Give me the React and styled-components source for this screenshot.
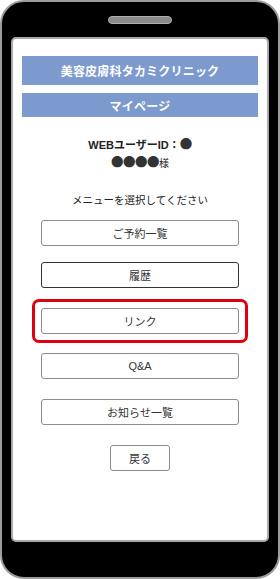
import React from 'react';
import styled, { createGlobalStyle } from 'styled-components';

const GlobalStyle = createGlobalStyle`
  html, body {
    margin: 0;
    padding: 0;
    background: #fff;
  }
  * {
    box-sizing: border-box;
  }
`;

const Phone = styled.div`
  width: 280px;
  height: 579px;
  background: #000;
  border: 2px solid #9c9c9c;
  border-radius: 24px;
  display: flex;
  flex-direction: column;
  align-items: center;
  font-family: 'Liberation Sans', 'Noto Sans CJK JP', sans-serif;
`;

const Speaker = styled.div`
  width: 64px;
  height: 8px;
  margin-top: 14px;
  border-radius: 4px;
  background: #8a8a8a;
  border: 1px solid #b0b0b0;
`;

const Screen = styled.div`
  width: 258px;
  height: 505px;
  margin-top: 13px;
  background: #fff;
  border: 2px solid #a8a8a8;
  border-radius: 5px;
  padding: 17px 9px 0;
  display: flex;
  flex-direction: column;
  align-items: center;
`;

const Banner = styled.div`
  width: 100%;
  height: ${p => p.$h}px;
  margin-bottom: ${p => p.$mb || 0}px;
  background: #7c9acd;
  color: #fff;
  font-weight: 700;
  font-size: 12px;
  display: flex;
  align-items: center;
  justify-content: center;
  letter-spacing: 0.2px;
`;

const UserInfo = styled.div`
  margin-top: 19px;
  text-align: center;
  color: #222;
  font-size: 11px;
  font-weight: 700;
  line-height: 18px;
`;

const Dots = styled.span`
  font-family: 'Noto Sans CJK JP', sans-serif;
  color: #333;
  font-size: 12.5px;
  line-height: 1;
  letter-spacing: -0.5px;
`;

const Sama = styled.span`
  font-size: 10px;
  font-weight: 400;
`;

const Prompt = styled.p`
  margin: 20px 0 0;
  font-size: 10.5px;
  color: #222;
  line-height: 14px;
`;

const MenuList = styled.div`
  margin-top: 13px;
  display: flex;
  flex-direction: column;
  align-items: center;
`;

const MenuButton = styled.button`
  width: ${p => (p.$small ? '60px' : '198px')};
  height: 26px;
  margin-top: ${p => p.$mt || 0}px;
  background: #fff;
  border: 1px solid ${p => (p.$dark ? '#333' : '#8c8c8c')};
  border-radius: 3px;
  font-family: inherit;
  font-size: 11px;
  color: #333;
  padding: 0;
  cursor: pointer;
`;

const Highlight = styled.div`
  margin-top: 11px;
  padding: 6px 6px;
  border: 3px solid #e0000f;
  border-radius: 7px;
  display: flex;
`;

const App = () => (
  <>
    <GlobalStyle />
    <Phone>
      <Speaker />
      <Screen>
        <Banner $h={29} $mb={8}>美容皮膚科タカミクリニック</Banner>
        <Banner $h={24}>マイページ</Banner>
        <UserInfo>
          WEBユーザーID：<Dots>●</Dots>
          <br />
          <Dots>●●●●</Dots>
          <Sama>様</Sama>
        </UserInfo>
        <Prompt>メニューを選択してください</Prompt>
        <MenuList>
          <MenuButton>ご予約一覧</MenuButton>
          <MenuButton $dark $mt={16}>履歴</MenuButton>
          <Highlight>
            <MenuButton>リンク</MenuButton>
          </Highlight>
          <MenuButton $mt={10}>Q&amp;A</MenuButton>
          <MenuButton $mt={20}>お知らせ一覧</MenuButton>
          <MenuButton $small $mt={20}>戻る</MenuButton>
        </MenuList>
      </Screen>
    </Phone>
  </>
);

export default App;
